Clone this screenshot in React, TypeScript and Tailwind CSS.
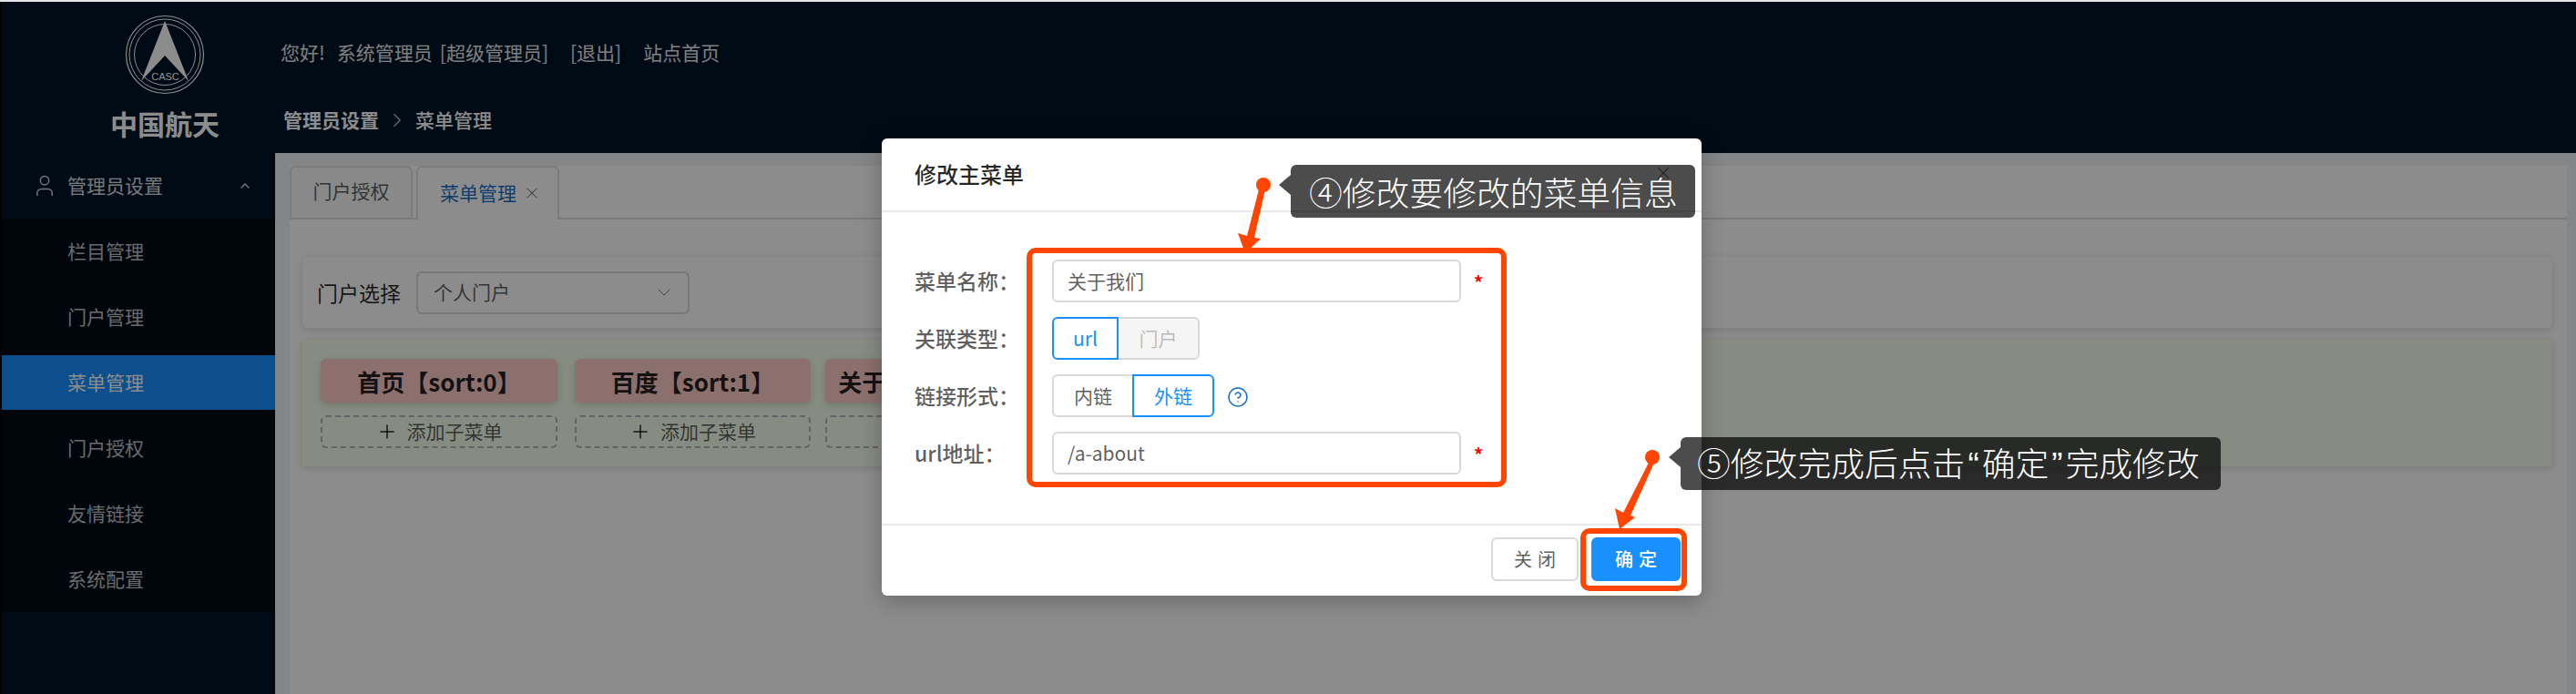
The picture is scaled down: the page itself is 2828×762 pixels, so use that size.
import type { ReactNode } from "react";
import { ChevronDown, ChevronUp, ChevronRight, CircleHelp, Plus, User, X } from "lucide-react";

const subMenus = ["栏目管理", "门户管理", "菜单管理", "门户授权", "友情链接", "系统配置"];

function Logo() {
  return (
    <svg width="88" height="88" viewBox="0 0 88 88" fill="none" className="mt-[14px]">
      <circle cx="44" cy="44" r="42.5" stroke="#fff" strokeWidth="1.2" />
      <circle cx="44" cy="44" r="39" stroke="#fff" strokeWidth="1" />
      <circle cx="44" cy="44" r="33.5" stroke="#fff" strokeWidth="1" />
      <path d="M44 7 L70 73 L44 45 L18 73 Z" fill="#fff" />
      <text x="44.5" y="72" textAnchor="middle" fontSize="11" fill="#fff" fontFamily="'Liberation Sans', sans-serif">CASC</text>
    </svg>
  );
}

function Sidebar() {
  return (
    <aside className="w-[302px] shrink-0 border-l-2 border-black bg-[#001529] text-white">
      <div className="flex h-[166px] flex-col items-center pl-[58px]">
        <Logo />
        <div className="mt-[11px] text-[30px] leading-[40px] font-bold">中国航天</div>
      </div>
      <div className="flex h-[72px] items-center pl-[33px] text-[21px] text-white/85">
        <User size={28} strokeWidth={1.25} />
        <span className="ml-[11px]">管理员设置</span>
        <ChevronUp size={16} className="ml-[82px]" />
      </div>
      <div className="flex flex-col gap-[12px] bg-[#000c17] py-[6px] text-[21px] text-white/75">
        {subMenus.map((m) => (
          <div key={m} className={"flex h-[60px] items-center pl-[72px] " + (m === "菜单管理" ? "bg-[#1890ff] text-white" : "")}>
            {m}
          </div>
        ))}
      </div>
    </aside>
  );
}

function Header() {
  return (
    <header className="h-[166px] bg-[#001529] pl-[6px] text-[21px] text-white">
      <div className="flex h-[112px] items-center text-white/90">
        <span>您好!</span>
        <span className="ml-[13px]">系统管理员</span>
        <span className="ml-[8px]">[超级管理员]</span>
        <span className="ml-[24px]">[退出]</span>
        <span className="ml-[24px]">站点首页</span>
      </div>
      <div className="mt-[-2px] flex h-[40px] items-center font-semibold">
        <span className="ml-[3px]">管理员设置</span>
        <ChevronRight size={26} strokeWidth={1} className="mx-[7px] opacity-80" />
        <span className="font-medium">菜单管理</span>
      </div>
    </header>
  );
}

function MenuColumn({ title, cls }: { title: string; cls: string }) {
  return (
    <div className={"shrink-0 " + cls}>
      <div className="flex h-[48px] items-center justify-center whitespace-nowrap rounded-[6px] bg-[#ffccc7] text-[26px] font-semibold text-black/85 shadow-[0_3px_8px_rgba(0,0,0,0.15)]">
        {title}
      </div>
      <div className="mt-[14px] flex h-[36px] items-center justify-center rounded-[6px] border-2 border-dashed border-[#b5b5b5] text-[21px] text-black/65">
        <Plus size={24} strokeWidth={1.5} className="text-black/85" />
        <span className="ml-[10px]">添加子菜单</span>
      </div>
    </div>
  );
}

function Content() {
  return (
    <main className="mt-[14px] mr-[10px] ml-[16px] flex-1 bg-white">
      <div className="flex h-[59px] items-end border-b-2 border-[#e0e0e0]">
        <div className="mb-[-2px] flex h-[59px] w-[135px] items-center justify-center rounded-t-[6px] border-2 border-[#e0e0e0] bg-[#fafafa] pb-[4px] text-[21px] text-black/65">
          门户授权
        </div>
        <div className="mb-[-2px] ml-[4px] flex h-[59px] w-[157px] items-center rounded-t-[6px] border-2 border-b-0 border-[#e0e0e0] bg-white pb-[2px] pl-[24px] text-[21px] text-[#1d6fc4]">
          菜单管理
          <X size={20} strokeWidth={1.25} className="ml-[7px] text-black/55" />
        </div>
      </div>
      <div className="mt-[41px] mr-[16px] ml-[14px] flex h-[78px] items-center rounded-[6px] bg-white pl-[16px] shadow-[0_2px_8px_rgba(0,0,0,0.15)]">
        <span className="text-[23px] text-black/85">门户选择</span>
        <div className="ml-[17px] flex h-[47px] w-[300px] items-center justify-between rounded-[6px] border-2 border-[#d9d9d9] pr-[14px] pl-[17px] text-[21px] text-black/65">
          个人门户
          <ChevronDown size={24} strokeWidth={1} className="text-black/50" />
        </div>
      </div>
      <div className="mt-[13px] mr-[16px] ml-[14px] flex h-[139px] rounded-[2px] bg-[#f6ffed] pt-[21px] pl-[20px] shadow-[0_2px_8px_rgba(0,0,0,0.15)]">
        <MenuColumn title="首页【sort:0】" cls="w-[260px]" />
        <MenuColumn title="百度【sort:1】" cls="ml-[19px] w-[259px]" />
        <MenuColumn title="关于我们【sort:2】" cls="ml-[16px] w-[260px]" />
      </div>
    </main>
  );
}

function Row({ label, children, star }: { label: string; children: ReactNode; star?: boolean }) {
  return (
    <div className="flex h-[47px] items-center">
      <span className="w-[151px] shrink-0 text-[23px] font-medium text-black/65">{label}</span>
      {children}
      {star && <span className="mt-[2px] ml-[14px] text-[20px] font-bold text-[#ff0000]">*</span>}
    </div>
  );
}

function Input({ value }: { value: string }) {
  return (
    <div className="flex h-[47px] w-[449px] items-center rounded-[6px] border-2 border-[#d9d9d9] pl-[15px] text-[21px] text-black/65">{value}</div>
  );
}

function Dialog() {
  return (
    <div className="absolute top-[152px] left-[968px] w-[900px] rounded-[6px] bg-white shadow-[0_6px_24px_rgba(0,0,0,0.25)]">
      <div className="relative flex h-[81px] items-center border-b-2 border-[#e8e8e8] pb-[2px] pl-[36px] text-[24px] leading-none font-medium text-black/85">
        修改主菜单
        <X size={22} strokeWidth={1.5} className="absolute top-[27px] right-[31px] text-black/45" />
      </div>
      <div className="flex h-[342px] flex-col gap-[16px] pt-[52px] pl-[36px]">
        <Row label="菜单名称：" star><Input value="关于我们" /></Row>
        <Row label="关联类型：">
          <div className="flex h-[47px] text-[21px]">
            <div className="flex w-[73px] items-center justify-center rounded-l-[6px] border-2 border-[#1890ff] text-[#1890ff]">url</div>
            <div className="flex w-[89px] items-center justify-center rounded-r-[6px] border-2 border-l-0 border-[#d9d9d9] bg-[#f5f5f5] text-black/25">门户</div>
          </div>
        </Row>
        <Row label="链接形式：">
          <div className="flex h-[47px] text-[21px]">
            <div className="flex w-[88px] items-center justify-center rounded-l-[6px] border-2 border-r-0 border-[#d9d9d9] text-black/65">内链</div>
            <div className="flex w-[90px] items-center justify-center rounded-r-[6px] border-2 border-[#1890ff] text-[#1890ff]">外链</div>
          </div>
          <CircleHelp size={24} strokeWidth={1.5} className="mt-[2px] ml-[14px] text-[#1a6ec8]" />
        </Row>
        <Row label="url地址：" star><Input value="/a-about" /></Row>
      </div>
      <div className="flex h-[79px] justify-end gap-[14px] border-t-2 border-[#e8e8e8] pt-[13px] pr-[23px] text-[20px]">
        <div className="flex h-[48px] w-[96px] items-center justify-center rounded-[6px] border-2 border-[#d9d9d9] pl-[6px] tracking-[0.3em] text-black/65">关闭</div>
        <div className="flex h-[48px] w-[98px] items-center justify-center rounded-[6px] bg-[#1890ff] pl-[6px] font-medium tracking-[0.3em] text-white">确定</div>
      </div>
    </div>
  );
}

function Callout({ cls, children }: { cls: string; children: ReactNode }) {
  return (
    <div className={"absolute flex h-[58px] items-center rounded-[6px] bg-black/70 whitespace-nowrap text-white " + cls}>
      <span className="absolute top-[11px] -left-[13px] h-0 w-0 border-y-[11px] border-r-[13px] border-y-transparent border-r-black/70" />
      <span className="text-[36.8px] leading-none font-light">{children}</span>
    </div>
  );
}

function Quote({ children }: { children: ReactNode }) {
  return <span className="mx-[3px] font-['Liberation_Sans',sans-serif]">{children}</span>;
}

export default function App() {
  return (
    <div className="relative h-[762px] w-[2828px] overflow-hidden bg-[#f0f2f5] font-['Noto_Sans_CJK_SC',sans-serif]">
      <div className="h-[2px] bg-[#e4e6ea]" />
      <div className="flex h-[760px]">
        <Sidebar />
        <div className="flex min-w-0 flex-1 flex-col">
          <Header />
          <Content />
        </div>
      </div>
      <div className="absolute inset-x-0 top-[2px] bottom-0 bg-black/45" />
      <Dialog />
      <div className="absolute top-[272px] left-[1127px] h-[263px] w-[527px] rounded-[10px] border-[6px] border-[#ff4500]" />
      <div className="absolute top-[580px] left-[1735px] h-[69px] w-[117px] rounded-[10px] border-[6px] border-[#ff4500]" />
      <Callout cls="top-[181px] left-[1417px] w-[444px] pl-[20px]">④修改要修改的菜单信息</Callout>
      <Callout cls="top-[480px] left-[1845px] w-[593px] pl-[18px]">
        ⑤修改完成后点击<Quote>“</Quote>确定<Quote>”</Quote>完成修改
      </Callout>
      <svg className="absolute inset-0" width="2828" height="762" viewBox="0 0 2828 762" fill="#ff4500">
        <circle cx="1387" cy="203" r="8" />
        <polygon points="1382,208 1389,208 1377,261 1384,262 1367,278 1359,256 1369,259" />
        <circle cx="1814" cy="502" r="8" />
        <polygon points="1810,508 1816,508 1790,566 1795,568 1778,581 1773,558 1782,563" />
      </svg>
    </div>
  );
}
